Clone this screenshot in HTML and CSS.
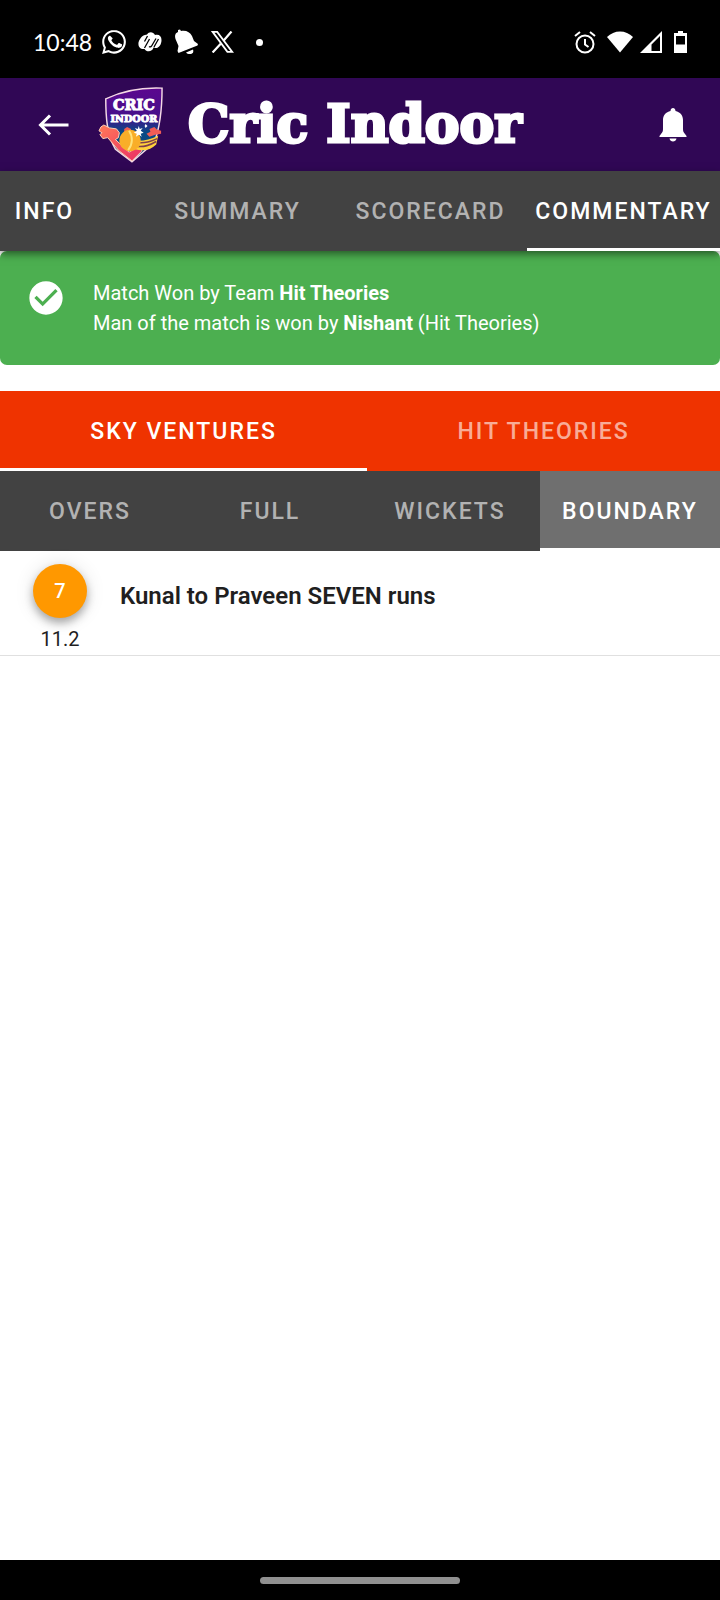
FILE: index.html
```html
<!DOCTYPE html>
<html lang="en">
<head>
<meta charset="utf-8">
<meta name="viewport" content="width=device-width, initial-scale=1">
<title>Cric Indoor</title>
<link rel="stylesheet" href="styles.css">
</head>
<body>
<div class="status-bar">
  <div class="status-left">
    <time class="clock">10:48</time>
    <svg width="24" height="24" viewBox="0 0 24 24" fill="#fff" aria-hidden="true"><path d="M12.040 0C5.500 0 .2 5.300.2 11.800c0 2.100.5 4.100 1.600 5.900L.1 24l6.400-1.700c1.700.9 3.600 1.400 5.500 1.400 6.500 0 11.900-5.300 11.900-11.900C23.900 5.300 18.600 0 12 0zm0 21.600c-1.800 0-3.500-.5-5-1.400l-.4-.2-3.700 1 1-3.700-.2-.4c-1-1.600-1.500-3.400-1.500-5.200C2.200 6.400 6.600 2 12 2s9.800 4.400 9.800 9.800-4.400 9.800-9.800 9.800zM8.600 6.200c-.3-.5-.5-.5-1-.5-.6 0-1.700.9-1.700 2.500 0 1.700 1.200 3.300 1.400 3.500.2.300 2.400 3.900 6 5.300 3 1.200 3.600.9 4.200.8.700 0 2.100-.8 2.300-1.700.3-.8.300-1.500.2-1.600-.1-.3-.4-.4-2.700-1.500-.4-.1-.6-.1-.9.300l-1.100 1.400c-.2.200-.4.200-.8.100-3-1.300-4.300-3.300-5-4.400-.2-.4 0-.5.2-.7.500-.5 1-1.100.9-1.500z"/></svg>
    <svg width="24" height="20" viewBox="0 0 24 20" aria-hidden="true"><path fill="#fff" d="M4 4.500C6 2.500 8 3 9 2.500 11-.5 15-.5 17 3c4-1 6.500 1 6.500 5 0 4-2 7.500-5 8-1.500.2-2-.5-3-.5-1 4.500-7 5-9 1.500C2 17.500 0 14.500.5 10.500 1 8 2.500 6 4 4.500z"/><path d="M9.500 4 6.500 9.500M6.500 16l5-9M11 14.500c1.500 1 2.500 0 3.500-2l3.500-6M16 15l4.500-8" fill="none" stroke="#000" stroke-width="1.300"/></svg>
    <svg width="25" height="26" viewBox="0 0 25 26" fill="#fff" aria-hidden="true"><path d="M4 1 6 .5 7 2c5-1 9 1 11 5l2 5 4 3-.5 1.500L4.500 24 3.500 22l1-5L1.500 10C.5 6 1.500 4 4 3zM12 23.500l7-3c1 3-.5 4.500-3 4.500-2 0-3-.5-4-1.500z"/></svg>
    <svg width="23" height="22" viewBox="0 0 23 22" fill="none" stroke="#fff" aria-hidden="true"><path stroke-width="1.800" d="M1.600.9h4.600l15 20h-4.800z"/><path stroke-width="2.200" d="M20.500.5 12.700 9.400M9.700 12.700 1.600 21.500"/></svg>
    <span class="more-dot"></span>
  </div>
  <div class="status-right">
    <svg width="22" height="23" viewBox="0 0 22 23" fill="none" stroke="#fff" stroke-width="2" aria-hidden="true"><circle cx="11" cy="13" r="8.500"/><path d="M1 5 6 1M21 5l-5-4M11 8v5.500l3.500 2.500"/></svg>
    <svg class="wifi" width="26" height="22" viewBox="0 0 26 22" fill="#fff" aria-hidden="true"><path d="M0 6C7-1.500 19-1.500 26 6L13 21.500z"/></svg>
    <svg width="22" height="22" viewBox="0 0 22 22" fill="#fff" aria-hidden="true"><path fill-rule="evenodd" d="M22 0v22H0zM20 5l-8.500 8.500V20H20z"/></svg>
    <svg class="battery" width="13" height="22" viewBox="0 0 13 22" fill="#fff" aria-hidden="true"><path fill-rule="evenodd" d="M4 0h5v2h4v20H0V2h4zM2 5v8.500h9V5z"/></svg>
  </div>
</div>

<header class="app-bar">
  <button class="icon-button" type="button" aria-label="Back">
    <svg width="32" height="22" viewBox="0 0 32 22" fill="none" stroke="#fff" stroke-width="3" aria-hidden="true"><path d="M30.500 11H3M12 1.500 2.500 11l9.500 9.500"/></svg>
  </button>
  <svg class="logo" width="66" height="78" viewBox="0 0 68 80" role="img" aria-label="Cric Indoor logo">
    <defs><linearGradient id="shield" x1="0" y1="0" x2="0" y2="1"><stop offset="0" stop-color="#5c078f"/><stop offset=".4" stop-color="#45108a"/><stop offset=".6" stop-color="#074a86"/><stop offset="1" stop-color="#164078"/></linearGradient>
    <linearGradient id="bat" x1="0" y1="0" x2="1" y2="1"><stop offset="0" stop-color="#ff7a58"/><stop offset="1" stop-color="#e92c65"/></linearGradient></defs>
    <path d="M8 13C25 5 42 1 66 2 66 24 64 42 58 58L35 78 18 65C9 50 8 31 8 13z" fill="url(#shield)" stroke="#f4d9e5" stroke-width="1.500"/>
    <path d="m50 49 4-2-1-3 5-2 3 3 4 1v3l-6 1-6 2z" fill="#f15c55"/>
    <path d="M27 50v-6l3-2 4 2v8z" fill="#f15c55"/>
    <path d="m1 46 2-4 3-2 6 3 7 1 3 4-1 5-3 2 14 13 15-9-2 8-10 10-14-11-11-13-5 1-3-4 2-2z" fill="url(#bat)" stroke="#ffd4b8"/>
    <path d="M38 56c8 1 15-1 24-5l-2 9c-6 6-13 7-22 5z" fill="#ffd13c"/>
    <path d="M40 58c9 1 14-1 21-4M40 62c8 1 13-1 20-5" fill="none" stroke="#7e3f4b" stroke-width="1.500"/>
    <circle cx="33" cy="56" r="11" fill="#f9ae28"/><path d="M32 46c4 6 4 14-1 20" fill="none" stroke="#ffe27b" stroke-width="2"/>
    <path d="m42 41 1 3 3-1-2 3 3 2-3 1 1 3-3-2-3 2 1-3-3-1 3-2-2-3 3 1zM49 39l2 2-2 2-1-2z" fill="#fff"/>
    <text class="logo-top" x="37" y="25" text-anchor="middle">CRIC</text>
    <text class="logo-bottom" x="37" y="37" text-anchor="middle">INDOOR</text>
  </svg>
  <h1 class="app-title">Cric Indoor</h1>
  <button class="icon-button" type="button" aria-label="Notifications">
    <svg width="28" height="34" viewBox="0 0 28 34" fill="#fff" aria-hidden="true"><path d="M11.500 3c0-4 5-4 5 0C21 4 24 7 24 12v9c0 2 .5 3.500 2 5l1.500 2v1H.5v-1L2 26c1.500-1.500 2-3 2-5v-9c0-5 3-8 7.500-9zM10.500 30.500h7c-.5 4-6.500 4-7 0z"/></svg>
  </button>
</header>

<nav class="tabs section-tabs">
  <button class="tab visited" type="button">INFO</button>
  <button class="tab" type="button">SUMMARY</button>
  <button class="tab" type="button">SCORECARD</button>
  <button class="tab active" type="button">COMMENTARY</button>
</nav>

<main>
  <section class="result">
    <svg class="check" width="40" height="40" viewBox="0 0 24 24" fill="#fff" aria-hidden="true"><path d="M12 2C6.500 2 2 6.500 2 12s4.500 10 10 10 10-4.500 10-10S17.500 2 12 2m-2 15-5-5 1.400-1.400 3.600 3.600 7.600-7.600L19 8z"/></svg>
    <p class="result-text">Match Won by Team <b>Hit Theories</b><br>Man of the match is won by <b>Nishant</b> (Hit Theories)</p>
  </section>

  <nav class="tabs team-tabs">
    <button class="tab active" type="button">SKY VENTURES</button>
    <button class="tab" type="button">HIT THEORIES</button>
  </nav>
  <nav class="tabs filter-tabs">
    <button class="tab" type="button">OVERS</button>
    <button class="tab" type="button">FULL</button>
    <button class="tab" type="button">WICKETS</button>
    <button class="tab active" type="button">BOUNDARY</button>
  </nav>

  <article class="ball">
    <div class="ball-mark">
      <span class="runs">7</span>
      <span class="over">11.2</span>
    </div>
    <p class="ball-text">Kunal to Praveen SEVEN runs</p>
  </article>
</main>

<footer class="gesture-bar"><span class="gesture-pill"></span></footer>
</body>
</html>
```

FILE: styles.css
```css
* { box-sizing: border-box; }
body {
  margin: 0;
  min-height: 100vh;
  display: flex;
  flex-direction: column;
  background: #fff;
  color: #1f1f1f;
  font-family: Roboto, "Liberation Sans", sans-serif;
}
button { border: 0; padding: 0; background: none; color: inherit; font: inherit; }
h1, p { margin: 0; }
svg { display: block; flex: none; }
main { flex: 1; }

.status-bar {
  display: flex;
  justify-content: space-between;
  align-items: center;
  height: 78px;
  padding: 6px 33px 0;
  background: #000;
  color: #fff;
}
.status-left, .status-right { display: flex; align-items: center; gap: 12px; }
.clock { font: 23px/28px Lato, sans-serif; margin-right: -2px; }
.more-dot { width: 7px; height: 7px; margin-left: 10px; border-radius: 50%; background: #fff; }
.status-right { gap: 9px; }
.wifi { margin: 0 -2px 0 2px; }
.battery { margin-left: 3px; }

.app-bar {
  display: flex;
  align-items: center;
  height: 93px;
  padding: 0 33px 0 38px;
  background: #300755;
  color: #fff;
}
.logo { margin: 0 24px 0 28px; }
.logo-top, .logo-bottom { font-family: "DejaVu Serif", serif; font-weight: 700; fill: #fff; stroke: #fff; }
.logo-top { font-size: 15px; stroke-width: 1px; }
.logo-bottom { font-size: 10px; stroke-width: 1px; }
.app-title {
  flex: 1;
  padding-bottom: 2px;
  font: 700 52px/60px "DejaVu Serif", serif;
  -webkit-text-stroke: 3px #fff;
  white-space: nowrap;
}

.tabs { display: flex; height: 80px; background: #424242; }
.tab {
  border-top: 3px solid transparent;
  border-bottom: 3px solid transparent;
  color: rgba(255, 255, 255, .6);
  font-size: 23px;
  font-weight: 500;
  letter-spacing: 2px;
  white-space: nowrap;
}
.tab.active { color: #fff; border-bottom-color: #fff; }
.tab.visited { color: #fff; }
.section-tabs {
  position: relative;
  z-index: 1;
  justify-content: flex-end;
  overflow-x: clip;
  box-shadow: 0 3px 8px rgba(0, 0, 0, .5);
}
.section-tabs .tab { flex: 0 0 193px; }
.team-tabs { background: #ef3300; }
.team-tabs .tab { flex: 1 1 auto; }
.filter-tabs .tab { flex: 1 1 0; }
.filter-tabs .active { background: #6f6f6f; }

.result {
  display: flex;
  gap: 27px;
  margin-bottom: 26px;
  padding: 27px 26px;
  border-radius: 7px;
  background: #4caf50;
  color: #fff;
}
.result-text { font-size: 20px; line-height: 30px; }

.ball {
  display: flex;
  height: 105px;
  padding: 13px 33px 0;
  gap: 33px;
  border-bottom: 1px solid #e0e0e0;
}
.ball-mark { display: flex; flex-direction: column; align-items: center; gap: 9px; width: 54px; }
.runs {
  width: 54px;
  border-radius: 50%;
  background: #ff9800;
  color: #fff;
  font-size: 20px;
  font-weight: 500;
  line-height: 54px;
  text-align: center;
  box-shadow: 0 5px 8px rgba(0, 0, 0, .3), 0 1px 20px rgba(0, 0, 0, .12);
}
.over { font-size: 20px; line-height: 24px; }
.ball-text { font-size: 24px; font-weight: 600; line-height: 64px; }

.gesture-bar {
  display: flex;
  align-items: center;
  justify-content: center;
  height: 40px;
  background: #000;
}
.gesture-pill { width: 200px; height: 7px; border-radius: 4px; background: #909090; }
```
